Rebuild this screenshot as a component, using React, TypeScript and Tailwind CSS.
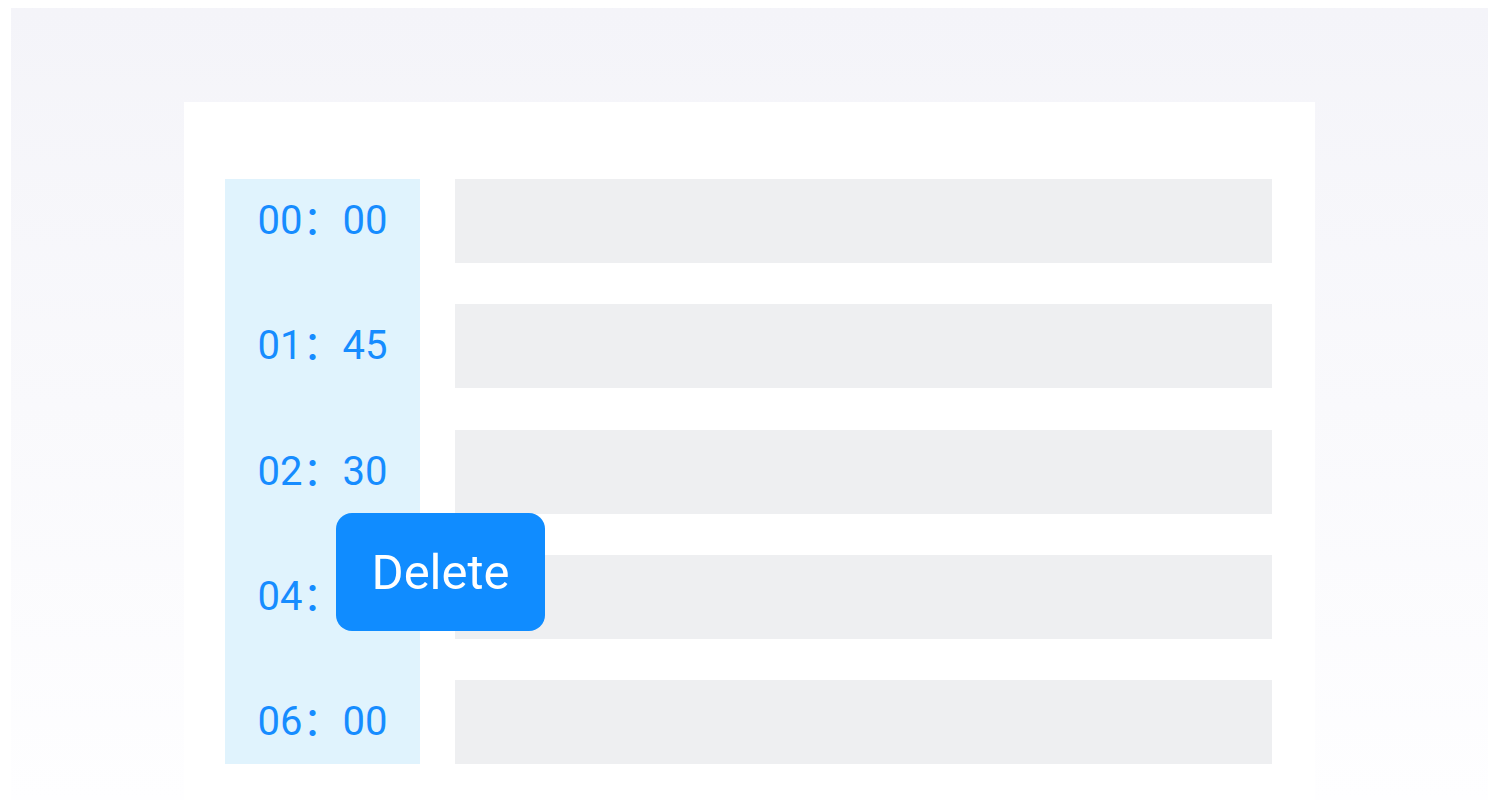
import React from 'react';

const times = ['00：00', '01：45', '02：30', '04：15', '06：00'];

export default function App() {
  return (
    <div
      className="h-[806px] w-full bg-white px-[11px] pt-[8px] pb-[6px]"
      style={{ fontFamily: 'Roboto, "Noto Sans CJK SC", sans-serif' }}
    >
      <div className="flex h-full flex-col bg-gradient-to-b from-[#f4f4f9] to-[#fefeff] pl-[173px] pr-[173px] pt-[94px]">
        <div className="flex-1 bg-white pl-[41px] pr-[43px] pt-[77px]">
          <div className="relative flex gap-[35px]">
            {/* time labels */}
            <div className="flex w-[195px] flex-col gap-[41.25px] bg-[#e0f3fd]">
              {times.map((t) => (
                <div key={t} className="flex h-[84px] items-center justify-center text-[40px] leading-none text-[#168cff]">
                  {t}
                </div>
              ))}
            </div>

            {/* bars */}
            <div className="flex flex-1 flex-col gap-[41.25px]">
              {times.map((t) => (
                <div key={t} className="h-[84px] bg-[#eeeff1]" />
              ))}
            </div>

            {/* Delete popup */}
            <button className="absolute left-[111px] top-[334px] flex h-[118px] w-[209px] items-center justify-center rounded-[16px] bg-[#108cff] text-[49px] leading-none text-white">
              Delete
            </button>
          </div>
        </div>
      </div>
    </div>
  );
}
